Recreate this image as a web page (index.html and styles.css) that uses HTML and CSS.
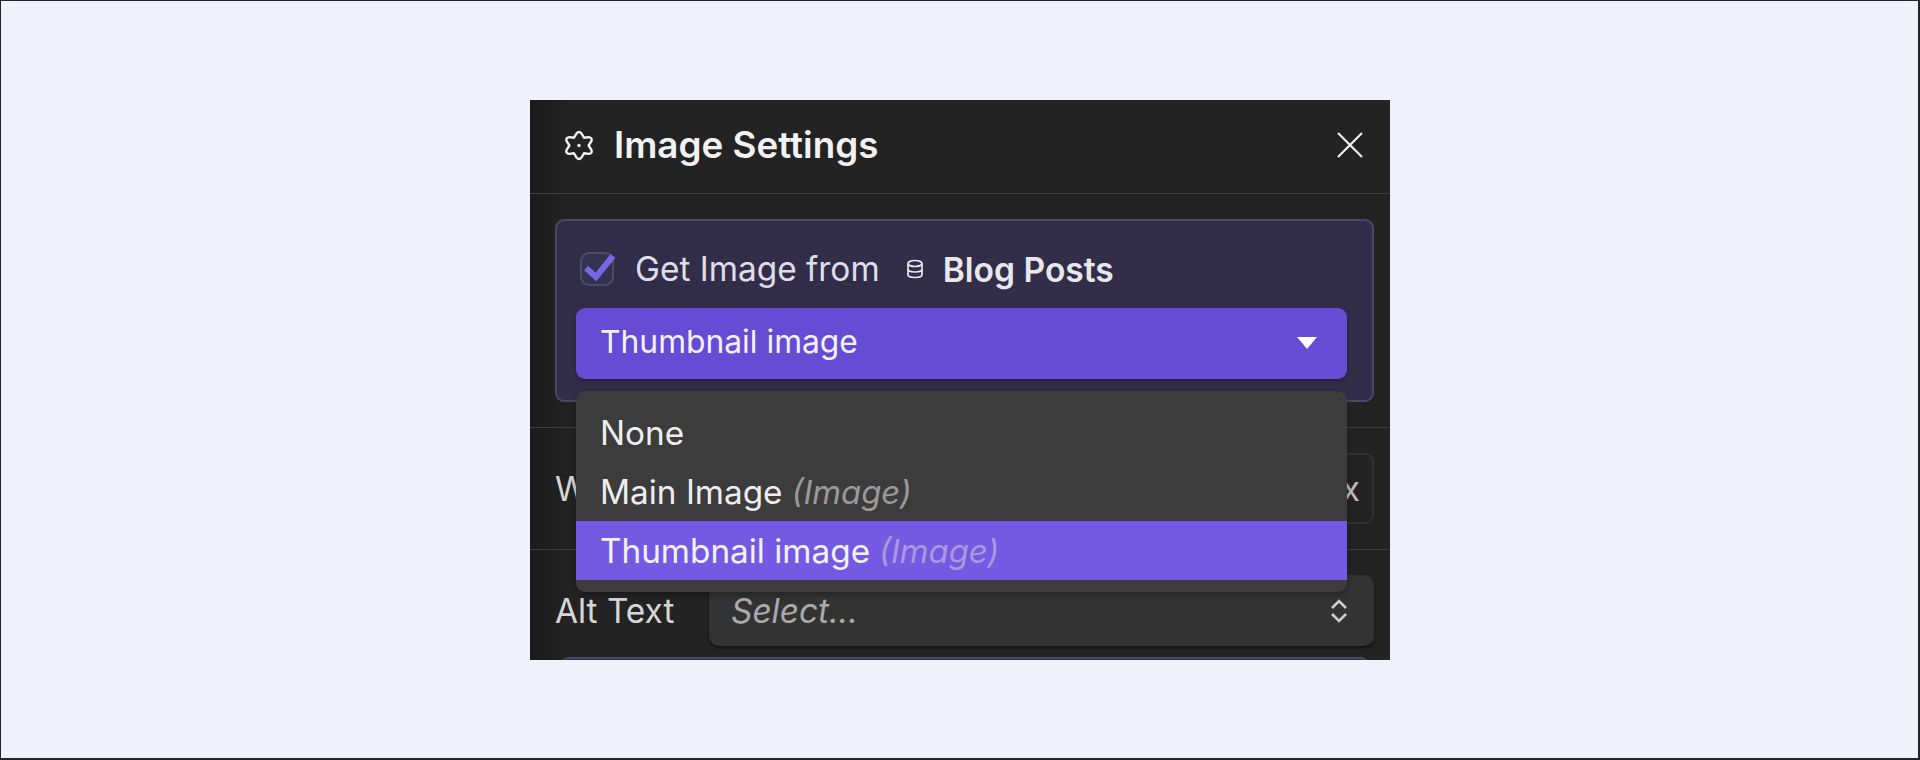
FILE: index.html
```html
<!DOCTYPE html>
<html lang="en">
<head>
<meta charset="utf-8">
<title>Image Settings</title>
<link rel="stylesheet" href="styles.css">
</head>
<body>
<main class="panel">
  <header class="head">
    <svg class="gear" viewBox="0 0 30 31" fill="none" stroke="currentColor" stroke-width="2.400" stroke-linejoin="round" stroke-linecap="round"><path d="M12.500 3.500Q15 .5 17.500 3.500L20 7.700 24.800 7.100Q28.600 7.700 27.400 11.200L24.600 15.500 27.400 19.800Q28.600 23.300 24.800 23.900L20 23.300 17.500 27.500Q15 30.500 12.500 27.500L10 23.300 5.200 23.900Q1.400 23.300 2.600 19.800L5.400 15.500 2.600 11.200Q1.400 7.700 5.200 7.100L10 7.700Z"/><circle cx="15" cy="15.500" r="1.700" fill="currentColor" stroke="none"/></svg>
    <h1 class="title">Image Settings</h1>
    <svg class="close" viewBox="0 0 26 26" fill="none" stroke="currentColor" stroke-width="2.2"><path d="M1 1 25 25M25 1 1 25"/></svg>
  </header>
  <section class="section">
    <div class="card">
      <div class="source">
        <span class="check">
          <svg viewBox="0 0 34 34" fill="none" stroke="#7c66e8" stroke-width="6"><path d="M5 17 15 26 32 5"/></svg>
        </span>
        <span class="source-text">Get Image from</span>
        <svg class="db" viewBox="0 0 18 20" fill="none" stroke="currentColor" stroke-width="1.7"><ellipse cx="9" cy="4.500" rx="7" ry="3"/><path d="M2 4.500V15.500C2 17.200 5.100 18.500 9 18.500S16 17.200 16 15.500V4.500M2 10C2 11.700 5.100 13 9 13S16 11.700 16 10"/></svg>
        <strong class="source-name">Blog Posts</strong>
      </div>
      <div class="picker">
        <span>Thumbnail image</span>
        <svg class="caret" viewBox="0 0 20 12" fill="#fff"><path d="M0 0H20L10 12Z"/></svg>
      </div>
    </div>
  </section>
  <section class="section row">
    <label class="label">Width</label>
    <div class="input"><span class="unit">px</span></div>
  </section>
  <section class="row-last">
    <label class="label">Alt Text</label>
    <div class="select">
      <em class="placeholder">Select...</em>
      <svg class="updown" viewBox="0 0 20 26" fill="none" stroke="currentColor" stroke-width="2.600"><path d="M3 10 10 3 17 10M3 16 10 23 17 16"/></svg>
    </div>
  </section>
  <div class="next"></div>
  <ul class="menu">
    <li class="item">None</li>
    <li class="item">Main Image <em class="type">(Image)</em></li>
    <li class="item active">Thumbnail image <em class="type">(Image)</em></li>
  </ul>
</main>
</body>
</html>
```

FILE: styles.css
```css
* { box-sizing: border-box; }
html, body { height: 100%; margin: 0; }
body {
  display: flex;
  align-items: center;
  justify-content: center;
  padding: 1px 0 0 1px;
  background: #f0f1fa;
  border: solid #23252b;
  border-width: 1px 2px 2px 1px;
  font-family: Inter, "Liberation Sans", sans-serif;
  font-size: 33.4px;
  color: #e8e8ea;
}
.panel {
  position: relative;
  display: flex;
  flex-direction: column;
  width: 860px;
  height: 560px;
  overflow: hidden;
  background: linear-gradient(90deg, #1b1b1b, #232323 40px);
}
.head {
  display: flex;
  align-items: center;
  height: 94px;
  flex: none;
  padding: 0 27px 3px 34px;
  border-bottom: 1px solid #3f3f3f;
  color: #f2f2f2;
}
.gear { width: 30px; height: 31px; flex: none; }
.title { margin: 0 0 1px 20px; font-size: 36.8px; font-weight: 600; flex: 1; }
.close { width: 26px; height: 26px; flex: none; }
.section {
  flex: none;
  padding: 25px 16px 25px 25px;
  border-bottom: 1px solid #3f3f3f;
}
.card {
  height: 183px;
  padding: 31px 25px 0 19px;
  border: 2px solid #4a4763;
  border-radius: 9px;
  background: #322e4a;
}
.source { display: flex; align-items: center; height: 34px; margin-left: 4px; }
.check {
  width: 34px;
  height: 34px;
  flex: none;
  border: 2px solid #4e4b68;
  border-radius: 9px;
  background: #35324f;
}
.check svg { display: block; width: 34px; height: 34px; margin: -3px 0 0 -1px; }
.source-text { margin-left: 21px; color: #dfdde8; }
.db { width: 18px; height: 20px; margin-left: 26px; flex: none; }
.source-name { margin-left: 19px; font-size: 33.6px; font-weight: 600; }
.picker {
  display: flex;
  align-items: center;
  justify-content: space-between;
  height: 71px;
  margin-top: 22px;
  padding: 0 30px 4px 24px;
  border-radius: 9px;
  background: #664cd4;
  color: #f3f1fc;
  font-size: 31.8px;
  box-shadow: 0 2px 4px rgba(20, 15, 50, .5);
}
.caret { width: 20px; height: 12px; margin-bottom: -2px; }
.row { display: flex; align-items: center; height: 122px; }
.label { width: 154px; flex: none; color: #d6d6d6; }
.input {
  display: flex;
  align-items: center;
  justify-content: flex-end;
  flex: 1;
  height: 71px;
  padding: 0 12px 0 0;
  border: 2px solid #333;
  border-radius: 9px;
  color: #bbb;
}
.row-last {
  display: flex;
  align-items: center;
  flex: none;
  margin-top: 25px;
  padding: 0 16px 0 25px;
}
.select {
  display: flex;
  align-items: center;
  justify-content: space-between;
  flex: 1;
  height: 71px;
  padding: 0 25px 0 22px;
  border-radius: 10px;
  background: #333;
  box-shadow: 0 2px 3px rgba(0, 0, 0, .5);
}
.placeholder { color: #aaa; }
.updown { width: 20px; height: 26px; color: #ccc; }
.next {
  flex: none;
  height: 20px;
  margin: 11px 20px 0 30px;
  border-radius: 9px 9px 0 0;
  background: #322e4a;
  border-top: 2px solid #4a4763;
}
.menu {
  position: absolute;
  left: 46px;
  top: 291px;
  width: 771px;
  margin: 0;
  padding: 12px 0;
  list-style: none;
  border-radius: 9px;
  background: #3c3c3c;
  box-shadow: 0 3px 6px rgba(0, 0, 0, .3);
}
.item {
  display: flex;
  align-items: center;
  gap: 9px;
  height: 59px;
  padding: 0 24px;
  font-size: 33.3px;
  color: #eee;
}
.type { font-size: 32.8px; color: #999; }
.active { background: #745ae2; color: #f3f1fc; }
.active .type { color: #a999dd; }
```
